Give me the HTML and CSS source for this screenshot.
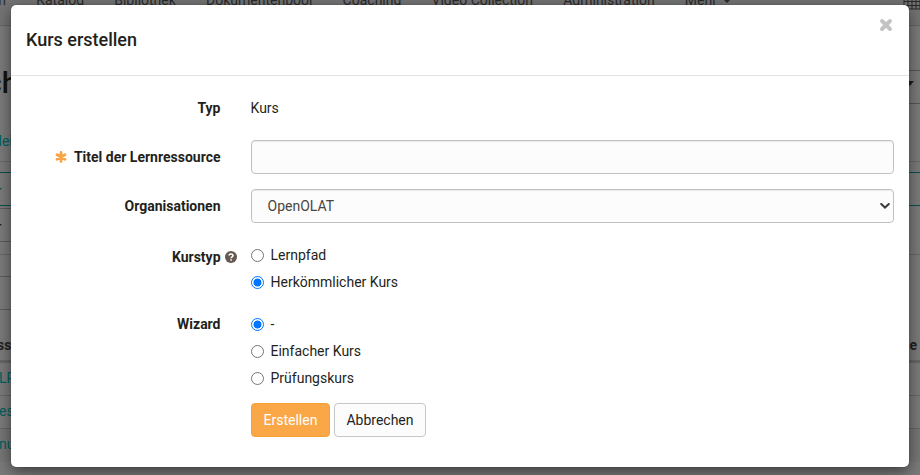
FILE: index.html
```html
<!DOCTYPE html>
<html lang="de">
<head>
<meta charset="utf-8">
<title>Kurs erstellen</title>
<link rel="stylesheet" href="styles.css">
</head>
<body>
<div class="page">
  <nav class="nav">
    <div class="nav-items"><span class="nav-first">n</span><span>Katalog</span><span>Bibliothek</span><span>Dokumentenpool</span><span>Coaching</span><span>Video Collection</span><span>Administration</span><span class="more">Mehr <i class="caret"></i></span></div>
    <svg class="calendar" width="17" height="19" viewBox="0 0 17 19"><path d="M1 3H17V18H1ZM1 7H17M1 10.5H17M1 14.5H17M5 7V18M9 7V18M13 7V18" fill="none" stroke="#292929"/></svg>
  </nav>
  <div class="head"><h1>ch</h1><div class="tool"><i class="caret wide"></i></div></div>
  <div class="links">dei</div>
  <div class="tab"><i class="caret"></i></div>
  <div class="filter"><i class="caret"></i></div>
  <div class="strip"></div>
  <div class="gap"></div>
  <div class="search"></div>
  <div class="thead"><b>ss</b><b>e</b></div>
  <div class="row">LP</div>
  <div class="row">es</div>
  <div class="row last">nu</div>
</div>
<main class="modal">
  <header class="modal-head">
    <h4>Kurs erstellen</h4>
    <svg class="close" width="14" height="14" viewBox="0 0 14 14"><path d="M3 3L11 11M11 3L3 11" stroke="#c3c3c3" stroke-width="3.9" stroke-linecap="round"/></svg>
  </header>
  <form class="form">
    <div class="group type"><label>Typ</label><p>Kurs</p></div>
    <div class="group title"><label><svg class="star" width="12" height="12" viewBox="0 0 12 12"><path d="M6 1.4V10.6M2 3.7L10 8.3M10 3.7L2 8.3" stroke="#f9a545" stroke-width="2.8" stroke-linecap="round"/></svg>Titel der Lernressource</label><input class="control" type="text"></div>
    <div class="group orgs"><label>Organisationen</label><div class="control select">OpenOLAT<svg width="10" height="6" viewBox="0 0 10 6"><path d="M1.2 1L5 4.6L8.8 1" fill="none" stroke="#3b3b3b" stroke-width="2" stroke-linecap="round"/></svg></div></div>
    <div class="group kind"><label class="kind-label">Kurstyp<svg class="help" width="12" height="12" viewBox="0 0 12 12"><circle cx="6" cy="6" r="6" fill="#655850"/><path d="M4 4.5C4.2 2.4 8 2.4 8 4.6C8 5.9 6.1 5.8 6.1 7.3M6.1 8.2V9.8" fill="none" stroke="#fff" stroke-width="1.6"/></svg></label>
      <div class="options"><div class="option"><i class="radio"></i>Lernpfad</div><div class="option"><i class="radio on"></i>Herkömmlicher Kurs</div></div></div>
    <div class="group wizard"><label>Wizard</label>
      <div class="options"><div class="option"><i class="radio on"></i>-</div><div class="option"><i class="radio"></i>Einfacher Kurs</div><div class="option"><i class="radio"></i>Prüfungskurs</div></div></div>
    <div class="buttons"><button type="button" class="btn primary">Erstellen</button><button type="button" class="btn">Abbrechen</button></div>
  </form>
</main>
</body>
</html>
```
FILE: styles.css
```css
* { box-sizing: border-box; }
body {
  margin: 0;
  height: 475px;
  overflow: hidden;
  background: #7b7b7b;
  color: #241f1b;
  font: 14px/20px Roboto, "Liberation Sans", sans-serif;
}
.page { height: 475px; }
.nav {
  display: flex;
  justify-content: space-between;
  height: 26px;
  background: #737373;
  border-bottom: 1px solid #646464;
  color: #2b2b2b;
}
.nav-items { display: flex; gap: 30.2px; margin-top: -10px; white-space: nowrap; }
.nav-first { width: 6px; display: flex; justify-content: flex-end; }
.calendar { margin-top: -9px; }
.caret {
  display: inline-block;
  border: 4px solid transparent;
  border-top-color: currentColor;
  border-bottom: 0;
}
.more .caret { margin: 0 0 2px 3px; }
.head { display: flex; justify-content: space-between; height: 94px; }
.head h1 { margin: 37px 0 0 -14px; font: 500 30px/40px Roboto, sans-serif; color: #17120e; }
.tool { width: 20px; height: 34px; margin-top: 44px; border: solid #565656; border-width: 1px 0; line-height: 20px; }
.wide { margin: 10px 0 0 6px; border-width: 5px 4px 0; }
.links { height: 42px; padding-top: 11px; margin-left: -6px; border-bottom: 1px solid #6a6a6a; color: #00605f; }
.tab { display: flex; height: 34px; margin-top: 10px; padding-top: 15px; border: solid #08504f; border-width: 1px 0; color: #08504f; }
.tab .caret, .filter .caret { margin-left: -6px; }
.filter { display: flex; width: 30px; height: 34px; margin-top: 2px; padding-top: 15px; border: solid #5c5c5c; border-width: 1px 0; }
.strip { height: 13px; border-bottom: 1px solid #686868; }
.gap { height: 21px; }
.search { width: 30px; height: 34px; border: solid #5c5c5c; border-width: 1px 0; }
.thead { display: flex; justify-content: space-between; height: 53px; padding: 25px 3px 0 0; border-bottom: 3px solid #666; }
.thead b:first-child { margin-left: -3px; }
.row { height: 33px; padding-top: 5px; border-bottom: 1px solid #666; color: #00605f; text-indent: -1px; }
.last { border: 0; background: #777; }
.modal {
  position: absolute;
  left: 11px;
  top: 5px;
  width: 898px;
  height: 462px;
  background: #fff;
  border-radius: 5px;
  box-shadow: 0 0 1px rgba(0, 0, 0, .5), 0 5px 15px rgba(0, 0, 0, .5);
}
.modal-head { display: flex; justify-content: space-between; height: 71px; padding: 13px 15px 0; border-bottom: 1px solid #e2e2e2; }
.modal-head h4 { margin: 12px 0 0; font-size: 18px; line-height: 20px; font-weight: 500; }
.close { margin-right: 1px; }
.form { padding: 15px 15px 0 0; }
.group { display: grid; grid-template-columns: 209.5px 1fr; column-gap: 30.5px; }
.group label { font-weight: 700; text-align: right; padding-top: 7px; }
.group p { margin: 7px 0 0 -.5px; }
.type { height: 49px; }
.title, .orgs { height: 49px; }
.star { margin-right: 7px; vertical-align: -1px; }
.control {
  width: 643px;
  height: 34px;
  border: 1px solid #c1c1c1;
  border-radius: 4px;
  background: #fcfcfc;
  box-shadow: inset 0 1px 1px rgba(0, 0, 0, .075);
}
.select { display: flex; align-items: center; justify-content: space-between; padding: 0 3px 0 15.5px; color: #4a4541; }
.kind { height: 69px; padding-top: 2px; }
.group .kind-label { display: flex; justify-content: flex-end; margin-right: -16.5px; padding-top: 7px; }
.help { margin: 4px 0 0 4.5px; }
.kind .options { padding-top: 5px; }
.wizard { height: 96px; }
.wizard .options { padding-top: 7px; }
.option { display: flex; align-items: center; height: 20px; margin-bottom: 7px; }
.radio { width: 13px; height: 13px; margin-right: 6.5px; border: 1px solid #767676; border-radius: 50%; background: #fff; }
.radio.on { border-color: #0075ff; background: radial-gradient(circle, #0075ff 3.7px, #fff 4.3px); }
.buttons { display: flex; gap: 4px; margin-left: 240px; }
.btn { height: 34px; padding: 0 11.5px; border: 1px solid #c6c6c6; border-radius: 4px; background: #fcfcfc; color: #241f1b; font: inherit; }
.primary { border-color: #f99d36; background: #faa747; color: #fff; }
```
